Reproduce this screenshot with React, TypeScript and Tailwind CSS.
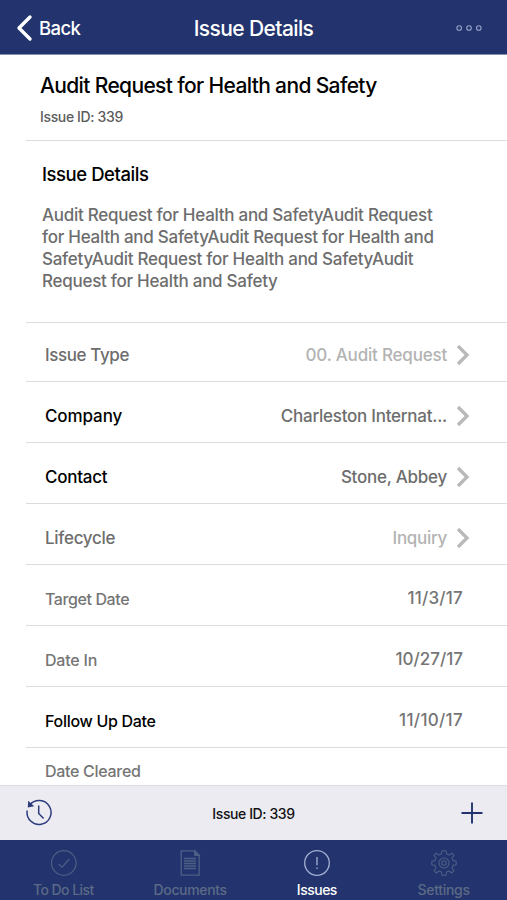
import React from 'react'

type Field = {
  label: string;
  value: string;
  link?: boolean;
  labelClass: string;
  valueClass: string;
  rowClass: string;
};

const FIELDS: Field[] = [
  { label: 'Issue Type', value: '00. Audit Request', link: true, labelClass: 'text-[17px] text-[#6d6d6d] tracking-[-0.4px]', valueClass: 'text-[#b3b3b3] tracking-[-0.2px]', rowClass: 'h-[59px] pt-[8px]' },
  { label: 'Company', value: 'Charleston Internat...', link: true, labelClass: 'text-[17px] text-black font-medium tracking-[-0.1px]', valueClass: 'text-[#6d6d6d] tracking-[-0.25px]', rowClass: 'h-[61px] pt-[10px]' },
  { label: 'Contact', value: 'Stone, Abbey', link: true, labelClass: 'text-[17px] text-black font-medium tracking-[-0.25px]', valueClass: 'text-[#6d6d6d] tracking-[-0.25px]', rowClass: 'h-[61px] pt-[10px]' },
  { label: 'Lifecycle', value: 'Inquiry', link: true, labelClass: 'text-[17px] text-[#6d6d6d] tracking-[-0.3px]', valueClass: 'text-[#b3b3b3] tracking-[-0.3px]', rowClass: 'h-[61px] pt-[10px]' },
  { label: 'Target Date', value: '11/3/17', labelClass: 'text-[16px] text-[#757575] tracking-[-0.4px]', valueClass: 'text-[#757575] tracking-[0.2px]', rowClass: 'h-[61px] pt-[8px]' },
  { label: 'Date In', value: '10/27/17', labelClass: 'text-[16px] text-[#757575] tracking-[-0.2px]', valueClass: 'text-[#757575]', rowClass: 'h-[61px] pt-[8px]' },
  { label: 'Follow Up Date', value: '11/10/17', labelClass: 'text-[16px] text-black font-medium tracking-[-0.3px]', valueClass: 'text-[#757575] tracking-[0.3px]', rowClass: 'h-[61px] pt-[8px]' },
];

function Chevron() {
  return (
    <svg width="14" height="22" viewBox="0 0 14 22" fill="none" stroke="#b9b9b9" strokeWidth="3.3" className="relative -top-px ml-[9px] -mr-[7px] shrink-0">
      <path d="M2 2 L11 11 L2 20" />
    </svg>
  );
}

function FieldRow({ field }: { field: Field }) {
  return (
    <div className={`ml-[26px] flex items-center justify-between border-b border-[#dcdcdc] pl-[19px] pr-[44px] font-[450] ${field.rowClass}`}>
      <span className={field.labelClass}>{field.label}</span>
      <span className="flex items-center text-[17px]">
        <span className={field.valueClass}>{field.value}</span>
        {field.link && <Chevron />}
      </span>
    </div>
  );
}

const TABS = [
  {
    label: 'To Do List',
    labelClass: 'text-[#5c6a85] tracking-[-0.55px]',
    icon: (
      <svg width="28" height="28" viewBox="0 0 28 28" fill="none" stroke="#4d5f86" strokeWidth="1.2">
        <circle cx="14.8" cy="14" r="12.3" />
        <path d="M9.6 15 L13.1 18.2 L20.3 10" />
      </svg>
    ),
  },
  {
    label: 'Documents',
    labelClass: 'text-[#5c6a85] tracking-[-0.35px]',
    icon: (
      <svg width="28" height="28" viewBox="0 0 28 28" fill="none" stroke="#4d5f86" strokeWidth="1.3">
        <path d="M5.2 1.8 H18.7 L23.2 6.3 V26.2 H5.2 Z" />
        <path d="M18.7 1.8 V6.3 H23.2 Z" fill="#4d5f86" />
        <path d="M8 9.5 H20 M8 12 H20 M8 14.5 H20 M8 17 H20 M8 19.5 H20" />
      </svg>
    ),
  },
  {
    label: 'Issues',
    labelClass: 'text-white tracking-[-0.5px]',
    icon: (
      <svg width="28" height="28" viewBox="0 0 28 28" fill="none" stroke="#a5b0d2" strokeWidth="1.3">
        <circle cx="14" cy="14" r="12.3" />
        <path d="M14 8 V16.3 M14 18.5 V20" />
      </svg>
    ),
  },
  {
    label: 'Settings',
    labelClass: 'text-[#5c6a85] tracking-[-0.3px]',
    icon: (
      <svg width="28" height="28" viewBox="0 0 28 28" fill="none" stroke="#4d5f86" strokeWidth="1.1" strokeLinejoin="round">
        <path d="M12 1.8 H16 L16.6 5 L19.2 6.1 L21.9 4.2 L24 6.3 L22 9 L23 11.6 L26.2 12.2 V15.8 L23 16.4 L22 19 L24 21.7 L21.7 24 L19 22 L16.5 23 L16 26.2 H12 L11.5 23 L9 22 L6.3 24 L4 21.7 L6 19 L5 16.4 L1.8 15.8 V12.2 L5 11.6 L6 9 L4 6.3 L6.1 4.2 L8.8 6.1 L11.5 5 Z" />
        <circle cx="14" cy="14" r="5" />
        <circle cx="14" cy="14" r="2.2" />
      </svg>
    ),
  },
];

export default function App() {
  return (
    <div className="flex h-[900px] w-[507px] flex-col overflow-hidden bg-white font-['Inter',sans-serif]">
      <header className="grid h-[54px] shrink-0 grid-cols-[1fr_auto_1fr] items-center bg-[#22336d] px-4 text-white">
        <button className="flex items-center gap-[6px] pt-[3px] text-left">
          <svg width="17" height="28" viewBox="0 0 17 28" fill="none" stroke="white" strokeWidth="3.4" strokeLinecap="round" strokeLinejoin="round" className="-mt-0.5">
            <path d="M14 3 L3 14 L14 25" />
          </svg>
          <span className="text-[18.5px] font-[450] tracking-[-0.6px]">Back</span>
        </button>
        <h1 className="pt-[3px] text-[21px] font-[450] tracking-[-0.6px]">Issue Details</h1>
        <svg width="26" height="8" viewBox="0 0 26 8" fill="none" stroke="#97a3cb" strokeWidth="1.1" className="mr-[9px] mt-px justify-self-end">
          <circle cx="3.2" cy="4" r="2.3" />
          <circle cx="13" cy="4" r="2.3" />
          <circle cx="22.8" cy="4" r="2.3" />
        </svg>
      </header>

      <main className="min-h-0 flex-1 overflow-hidden border-t border-[#8790b0]">
        <section className="ml-[26px] h-[86px] border-b border-[#dcdcdc] pl-[14px] pt-[17px]">
          <h2 className="text-[21px] font-medium leading-7 tracking-[-0.64px] text-black">Audit Request for Health and Safety</h2>
          <p className="mt-[7px] text-sm font-[450] leading-5 tracking-[-0.36px] text-[#5c5c5c]">Issue ID: 339</p>
        </section>

        <section className="ml-[26px] h-[182px] border-b border-[#dcdcdc] pl-4 pt-[21px]">
          <h3 className="text-[18.5px] font-medium leading-6 tracking-[-0.45px] text-black">Issue Details</h3>
          <p className="mt-[18px] whitespace-nowrap text-[17px] font-[450] leading-[22px] tracking-[-0.27px] text-[#6d6d6d]">
            Audit Request for Health and SafetyAudit Request<br />
            for Health and SafetyAudit Request for Health and<br />
            SafetyAudit Request for Health and SafetyAudit<br />
            Request for Health and Safety
          </p>
        </section>

        {FIELDS.map((field) => (
          <FieldRow key={field.label} field={field} />
        ))}
        <div className="ml-[26px] pl-[19px] pt-[11px] text-[16px] font-[450] leading-6 tracking-[-0.3px] text-[#757575]">Date Cleared</div>
      </main>

      {/* issue toolbar */}
      <div className="grid h-[55px] shrink-0 grid-cols-[1fr_auto_1fr] items-center border-t border-[#dddde1] bg-[#ebebf1] px-[23px]">
        <svg width="28" height="28" viewBox="0 0 28 28" fill="none" stroke="#2c3b7c" strokeWidth="1.5" className="ml-0.5">
          <path d="M4.8 5.8 A12 12 0 1 1 2.2 11.5" />
          <path d="M13.7 6.5 V14.5 L18.6 19.5" />
          <path d="M3.2 1.8 L2.8 8.4 L9.2 7.3 Z" fill="#2c3b7c" stroke="none" />
        </svg>
        <span className="pt-px text-sm font-medium tracking-[-0.4px] text-[#111]">Issue ID: 339</span>
        <svg width="24" height="24" viewBox="0 0 24 24" stroke="#22336d" strokeWidth="1.9" className="justify-self-end">
          <path d="M12 1.5 V22.5 M1.5 12 H22.5" />
        </svg>
      </div>

      <nav className="grid h-[60px] shrink-0 grid-cols-4 bg-[#22336d] pt-[9px]">
        {TABS.map((tab) => (
          <button key={tab.label} className="flex flex-col items-center">
            {tab.icon}
            <span className={`mt-[3px] text-sm font-medium leading-5 ${tab.labelClass}`}>{tab.label}</span>
          </button>
        ))}
      </nav>
    </div>
  )
}
